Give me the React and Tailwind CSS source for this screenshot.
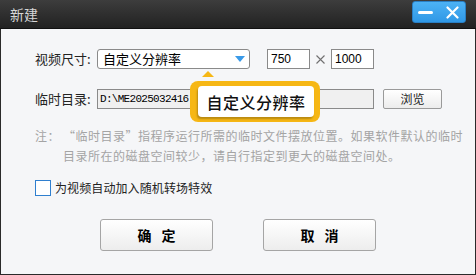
import React from "react";

const font = { fontFamily: '"Noto Sans CJK SC", "Liberation Sans", sans-serif' };

export default function App() {
  return (
    <div
      className="w-[476px] h-[275px] flex flex-col bg-[#2a2a2a] overflow-hidden"
      style={font}
    >
      {/* title bar */}
      <div className="h-[29px] flex items-start justify-between bg-gradient-to-b from-[#3d3d3d] to-[#222222] border-b border-[#111]">
        <div className="pl-[10px] pt-[5px] text-[14px] leading-[18px] text-[#d6d6d6]">新建</div>
        <div className="mr-[10px] mt-[1px] w-[54px] h-[22px] rounded-[3px] bg-gradient-to-b from-[#4cb2f5] to-[#2f98e6] border border-[#2a7fc4] flex items-center">
          <div className="ml-[5px] w-[15px] h-[3px] rounded-full bg-white"></div>
          <svg className="ml-[13px]" width="13" height="13" viewBox="0 0 13 13">
            <path d="M1.5 1.5 L11.5 11.5 M11.5 1.5 L1.5 11.5" stroke="white" strokeWidth="2.2" strokeLinecap="round" />
          </svg>
        </div>
      </div>

      {/* body */}
      <div className="relative flex-1 mx-[1px] mb-[1px] bg-[#f5f6f8] pl-[34px] flex flex-col">
        {/* row 1 */}
        <div className="mt-[20px] flex items-center h-[20px]">
          <div className="w-[62px] text-[13px] text-[#222]">视频尺寸:</div>
          <div className="w-[153px] h-[20px] rounded-[3px] border border-[#8a8a8a] bg-white flex items-center justify-between pl-[5px] pr-[4px]">
            <span className="text-[13px] leading-[18px] text-black">自定义分辨率</span>
            <svg width="10" height="6" viewBox="0 0 10 6">
              <path d="M0 0 L10 0 L5 6 Z" fill="#3a9ae8" />
            </svg>
          </div>
          <div className="ml-[17px] w-[43px] h-[20px] border border-[#8a8a8a] bg-white flex items-center pl-[3px] text-[12px] text-black" style={{ fontFamily: '"Liberation Sans", sans-serif' }}>
            750
          </div>
          <div className="w-[21px] flex justify-center">
            <svg width="9" height="9" viewBox="0 0 9 9">
              <path d="M0.5 0.5 L8.5 8.5 M8.5 0.5 L0.5 8.5" stroke="#707070" strokeWidth="1.1" />
            </svg>
          </div>
          <div className="w-[43px] h-[20px] border border-[#8a8a8a] bg-white flex items-center pl-[3px] text-[12px] text-black" style={{ fontFamily: '"Liberation Sans", sans-serif' }}>
            1000
          </div>
        </div>

        {/* row 2 */}
        <div className="mt-[20px] flex items-center h-[20px]">
          <div className="w-[62px] text-[13px] text-[#222]">临时目录:</div>
          <div className="w-[277px] h-[20px] border border-[#8a8a8a] bg-[#f0f0f0] flex items-center pl-[2px] text-[11px] tracking-[-0.7px] text-black" style={{ fontFamily: '"Liberation Mono", monospace' }}>
            D:\ME2025032416
          </div>
          <div className="ml-[9px] w-[59px] h-[20px] rounded-[2px] border border-[#9a9a9a] bg-gradient-to-b from-white to-[#ececec] flex items-center justify-center text-[12px] text-[#222]">
            浏览
          </div>
        </div>

        {/* note */}
        <div className="mt-[17px] flex text-[12px] leading-[20px] tracking-[0.5px] text-[#a4a4a4]">
          <div className="w-[28px] shrink-0">注：</div>
          <div>
            “临时目录”指程序运行所需的临时文件摆放位置。如果软件默认的临时
            <br />
            目录所在的磁盘空间较少，请自行指定到更大的磁盘空间处。
          </div>
        </div>

        {/* checkbox */}
        <div className="mt-[14px] flex items-center h-[16px]">
          <div className="w-[16px] h-[16px] border border-[#2f7fcf] bg-white"></div>
          <div className="ml-[4px] text-[12px] tracking-[0.1px] text-[#222]">为视频自动加入随机转场特效</div>
        </div>

        {/* buttons */}
        <div className="mt-[23px] ml-[65px] flex gap-[50px]">
          <div className="w-[113px] h-[32px] rounded-[3px] border border-[#a5a5a5] bg-gradient-to-b from-white to-[#ededed] flex items-center justify-center text-[14px] font-bold tracking-[10px] pl-[10px] text-black">
            确定
          </div>
          <div className="w-[113px] h-[32px] rounded-[3px] border border-[#a5a5a5] bg-gradient-to-b from-white to-[#ededed] flex items-center justify-center text-[14px] font-bold tracking-[10px] pl-[10px] text-black">
            取消
          </div>
        </div>

        {/* tooltip annotation */}
        <div className="absolute left-[201px] top-[42px] w-0 h-0 border-l-[6px] border-r-[6px] border-b-[6px] border-l-transparent border-r-transparent border-b-[#f6b715]"></div>
        <div className="absolute left-[189px] top-[52px] w-[130px] h-[41px] rounded-[8px] bg-[#f6b715] pl-[8px] pr-[6px] pt-[5px] pb-[5px]">
          <div className="w-full h-full rounded-[4px] bg-white shadow-[-1px_2px_2px_rgba(0,0,0,0.25)] flex items-center justify-center text-[16px] font-medium tracking-[0.5px] text-[#111]">
            自定义分辨率
          </div>
        </div>
      </div>
    </div>
  );
}
